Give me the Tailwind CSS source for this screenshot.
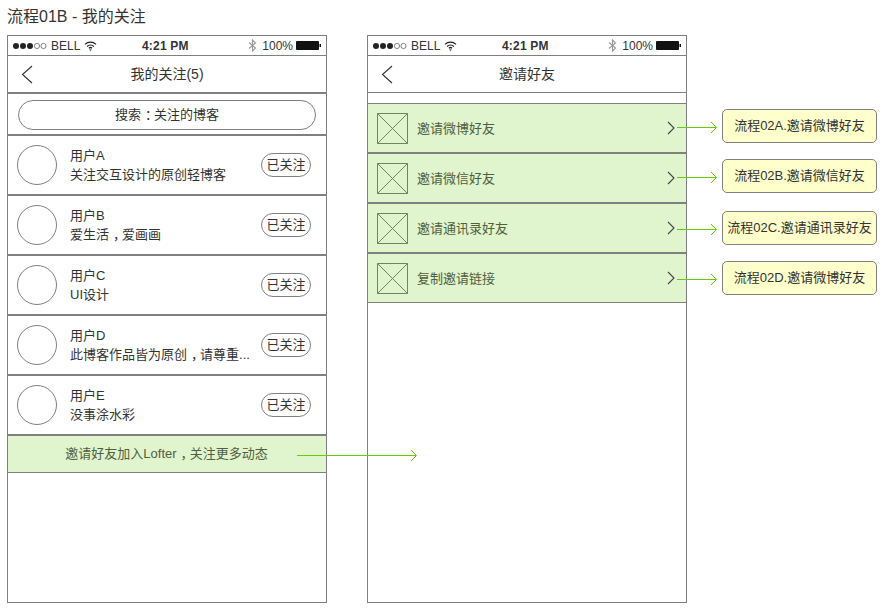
<!DOCTYPE html>
<html lang="zh-CN">
<head>
    <meta charset="UTF-8">
    <meta name="viewport" content="width=device-width, initial-scale=1.0">
    <title>流程01B - 我的关注</title>
    <script src="https://cdn.jsdelivr.net/npm/@tailwindcss/browser@4"></script>
</head>
<body class="relative w-[891px] h-[613px] overflow-hidden bg-white text-[13px] leading-[18px] text-[#333] font-['Liberation_Sans','Noto_Sans_CJK_SC',sans-serif]">
    <h1 class="h-[35px] pl-[7px] pt-[6px] text-[16px] leading-[22px] font-normal">流程01B - 我的关注</h1>

    <div class="flex pl-[7px]">
        <!-- 我的关注 -->
        <div class="w-[320px] h-[568px] border border-[#808080] shrink-0">
            <div class="flex items-center h-[20px] border-b border-[#808080] pl-[5px] pr-[5px] text-[12px] relative">
                <svg width="41" height="8" viewBox="0 0 41 8" class="shrink-0"><circle cx="3" cy="4" r="3" fill="#222"/><circle cx="10" cy="4" r="3" fill="#222"/><circle cx="17" cy="4" r="3" fill="#222"/><circle cx="24" cy="4" r="2.6" fill="none" stroke="#666" stroke-width=".8"/><circle cx="30.5" cy="4" r="2.6" fill="none" stroke="#666" stroke-width=".8"/></svg>
                <span class="ml-[-3px]">BELL</span>
                <svg width="13" height="10" viewBox="0 0 13 10" class="ml-[4px]"><path d="M1 3.4a8 8 0 0 1 11 0M3 5.4a5.2 5.2 0 0 1 7 0M4.9 7.2a2.4 2.4 0 0 1 3.2 0" fill="none" stroke="#222" stroke-width="1.3"/><path d="M6.5 10 5.2 8.4h2.6z" fill="#222"/></svg>
                <span class="absolute left-[134px] font-bold tracking-[.2px]">4:21 PM</span>
                <svg width="9" height="13" viewBox="0 0 9 13" class="ml-auto"><path d="M1 3.5 7.5 9 4.5 12V1l3 3L1 9.5" fill="none" stroke="#999" stroke-width="1.1"/></svg>
                <span class="ml-[5px]">100%</span>
                <svg width="25" height="9" viewBox="0 0 25 9" class="ml-[3px]"><rect x="0" y="0" width="23" height="9" rx="1" fill="#111"/><rect x="23.5" y="3" width="1.5" height="3" fill="#111"/></svg>
            </div>
            <div class="flex items-center h-[38px] border-b-2 border-[#808080] relative">
                <svg width="12" height="19" viewBox="0 0 12 19" class="ml-[13px]"><path d="M11 1 1.5 9.5 11 18" fill="none" stroke="#333" stroke-width="1.1"/></svg>
                <span class="absolute inset-x-0 text-center text-[14px]">我的关注(5)</span>
            </div>
            <div class="flex items-center h-[42px] border-b-2 border-[#808080] px-[10px]">
                <div class="w-[298px] h-[30px] mt-[2px] rounded-full border border-[#808080] flex items-center justify-center"><span>搜索<span class="ml-[4px] tracking-[-4px]">：</span>关注的博客</span></div>
            </div>

            <div class="flex items-center h-[60px] border-b-2 border-[#808080] pl-[9px] pr-[15px]">
                <div class="w-[40px] h-[40px] rounded-full border border-[#808080] shrink-0"></div>
                <div class="ml-[13px] flex-1 min-w-0"><p class="leading-[19px]">用户A</p><p class="leading-[19px]">关注交互设计的原创轻博客</p></div>
                <div class="w-[50px] h-[24px] rounded-full border border-[#808080] flex items-center justify-center shrink-0">已关注</div>
            </div>
            <div class="flex items-center h-[60px] border-b-2 border-[#808080] pl-[9px] pr-[15px]">
                <div class="w-[40px] h-[40px] rounded-full border border-[#808080] shrink-0"></div>
                <div class="ml-[13px] flex-1 min-w-0"><p class="leading-[19px]">用户B</p><p class="leading-[19px]">爱生活<span class="ml-[4px] tracking-[-4px]">，</span>爱画画</p></div>
                <div class="w-[50px] h-[24px] rounded-full border border-[#808080] flex items-center justify-center shrink-0">已关注</div>
            </div>
            <div class="flex items-center h-[60px] border-b-2 border-[#808080] pl-[9px] pr-[15px]">
                <div class="w-[40px] h-[40px] rounded-full border border-[#808080] shrink-0"></div>
                <div class="ml-[13px] flex-1 min-w-0"><p class="leading-[19px]">用户C</p><p class="leading-[19px]">UI设计</p></div>
                <div class="w-[50px] h-[24px] rounded-full border border-[#808080] flex items-center justify-center shrink-0">已关注</div>
            </div>
            <div class="flex items-center h-[60px] border-b-2 border-[#808080] pl-[9px] pr-[15px]">
                <div class="w-[40px] h-[40px] rounded-full border border-[#808080] shrink-0"></div>
                <div class="ml-[13px] flex-1 min-w-0"><p class="leading-[19px]">用户D</p><p class="leading-[19px] whitespace-nowrap">此博客作品皆为原创<span class="ml-[4px] tracking-[-4px]">，</span>请尊重...</p></div>
                <div class="w-[50px] h-[24px] rounded-full border border-[#808080] flex items-center justify-center shrink-0">已关注</div>
            </div>
            <div class="flex items-center h-[60px] border-b-2 border-[#808080] pl-[9px] pr-[15px]">
                <div class="w-[40px] h-[40px] rounded-full border border-[#808080] shrink-0"></div>
                <div class="ml-[13px] flex-1 min-w-0"><p class="leading-[19px]">用户E</p><p class="leading-[19px]">没事涂水彩</p></div>
                <div class="w-[50px] h-[24px] rounded-full border border-[#808080] flex items-center justify-center shrink-0">已关注</div>
            </div>
            <div class="flex items-center justify-center h-[37px] border-b border-[#808080] bg-[#e0f4cd] text-[#4f5f3f] pr-[1px]"><span>邀请好友加入Lofter<span class="ml-[4px] tracking-[-4px]">，</span>关注更多动态</span></div>
        </div>

        <!-- 邀请好友 -->
        <div class="w-[320px] h-[568px] ml-[40px] border border-[#808080] shrink-0">
            <div class="flex items-center h-[20px] border-b border-[#808080] pl-[5px] pr-[5px] text-[12px] relative">
                <svg width="41" height="8" viewBox="0 0 41 8" class="shrink-0"><circle cx="3" cy="4" r="3" fill="#222"/><circle cx="10" cy="4" r="3" fill="#222"/><circle cx="17" cy="4" r="3" fill="#222"/><circle cx="24" cy="4" r="2.6" fill="none" stroke="#666" stroke-width=".8"/><circle cx="30.5" cy="4" r="2.6" fill="none" stroke="#666" stroke-width=".8"/></svg>
                <span class="ml-[-3px]">BELL</span>
                <svg width="13" height="10" viewBox="0 0 13 10" class="ml-[4px]"><path d="M1 3.4a8 8 0 0 1 11 0M3 5.4a5.2 5.2 0 0 1 7 0M4.9 7.2a2.4 2.4 0 0 1 3.2 0" fill="none" stroke="#222" stroke-width="1.3"/><path d="M6.5 10 5.2 8.4h2.6z" fill="#222"/></svg>
                <span class="absolute left-[134px] font-bold tracking-[.2px]">4:21 PM</span>
                <svg width="9" height="13" viewBox="0 0 9 13" class="ml-auto"><path d="M1 3.5 7.5 9 4.5 12V1l3 3L1 9.5" fill="none" stroke="#999" stroke-width="1.1"/></svg>
                <span class="ml-[5px]">100%</span>
                <svg width="25" height="9" viewBox="0 0 25 9" class="ml-[3px]"><rect x="0" y="0" width="23" height="9" rx="1" fill="#111"/><rect x="23.5" y="3" width="1.5" height="3" fill="#111"/></svg>
            </div>
            <div class="flex items-center h-[37px] border-b border-[#808080] relative">
                <svg width="12" height="19" viewBox="0 0 12 19" class="ml-[13px]"><path d="M11 1 1.5 9.5 11 18" fill="none" stroke="#333" stroke-width="1.1"/></svg>
                <span class="absolute inset-x-0 text-center text-[14px]">邀请好友</span>
            </div>
            <div class="h-[10px]"></div>

            <div class="flex items-center h-[51px] border-t border-b-2 border-[#808080] bg-[#e0f4cd] text-[#4f5f3f] pl-[9px] pr-[11px]">
                <svg width="31" height="31" viewBox="0 0 31 31" class="shrink-0"><path d="M.5.5h30v30H.5zM.5.5l30 30M30.5.5l-30 30" fill="none" stroke="#6f8560"/></svg>
                <span class="ml-[9px] mt-[1px]">邀请微博好友</span>
                <svg width="8" height="14" viewBox="0 0 8 14" class="ml-auto"><path d="M1 1l6 6-6 6" fill="none" stroke="#444" stroke-width="1.1"/></svg>
            </div>
            <div class="flex items-center h-[50px] border-b-2 border-[#808080] bg-[#e0f4cd] text-[#4f5f3f] pl-[9px] pr-[11px]">
                <svg width="31" height="31" viewBox="0 0 31 31" class="shrink-0"><path d="M.5.5h30v30H.5zM.5.5l30 30M30.5.5l-30 30" fill="none" stroke="#6f8560"/></svg>
                <span class="ml-[9px] mt-[1px]">邀请微信好友</span>
                <svg width="8" height="14" viewBox="0 0 8 14" class="ml-auto"><path d="M1 1l6 6-6 6" fill="none" stroke="#444" stroke-width="1.1"/></svg>
            </div>
            <div class="flex items-center h-[50px] border-b-2 border-[#808080] bg-[#e0f4cd] text-[#4f5f3f] pl-[9px] pr-[11px]">
                <svg width="31" height="31" viewBox="0 0 31 31" class="shrink-0"><path d="M.5.5h30v30H.5zM.5.5l30 30M30.5.5l-30 30" fill="none" stroke="#6f8560"/></svg>
                <span class="ml-[9px] mt-[1px]">邀请通讯录好友</span>
                <svg width="8" height="14" viewBox="0 0 8 14" class="ml-auto"><path d="M1 1l6 6-6 6" fill="none" stroke="#444" stroke-width="1.1"/></svg>
            </div>
            <div class="flex items-center h-[49px] border-b border-[#808080] bg-[#e0f4cd] text-[#4f5f3f] pl-[9px] pr-[11px]">
                <svg width="31" height="31" viewBox="0 0 31 31" class="shrink-0"><path d="M.5.5h30v30H.5zM.5.5l30 30M30.5.5l-30 30" fill="none" stroke="#6f8560"/></svg>
                <span class="ml-[9px] mt-[1px]">复制邀请链接</span>
                <svg width="8" height="14" viewBox="0 0 8 14" class="ml-auto"><path d="M1 1l6 6-6 6" fill="none" stroke="#444" stroke-width="1.1"/></svg>
            </div>
        </div>

        <!-- 流程说明 -->
        <div class="ml-[35px] w-[155px] shrink-0 pt-[74px]">
            <div class="h-[34px] rounded-[5px] border border-[#808080] bg-[#ffffcc] flex items-center justify-center whitespace-nowrap">流程02A.邀请微博好友</div>
            <div class="h-[34px] mt-[16px] rounded-[5px] border border-[#808080] bg-[#ffffcc] flex items-center justify-center whitespace-nowrap">流程02B.邀请微信好友</div>
            <div class="h-[34px] mt-[18px] rounded-[5px] border border-[#808080] bg-[#ffffcc] flex items-center justify-center whitespace-nowrap">流程02C.邀请通讯录好友</div>
            <div class="h-[34px] mt-[16px] rounded-[5px] border border-[#808080] bg-[#ffffcc] flex items-center justify-center whitespace-nowrap">流程02D.邀请微博好友</div>
        </div>
    </div>

    <!-- 连接箭头 -->
    <div class="absolute left-[297px] top-[455px] w-[119px] h-px bg-[#66cc00]"></div>
    <div class="absolute left-[677px] top-[127px] w-[39px] h-px bg-[#66cc00]"></div>
    <div class="absolute left-[677px] top-[177px] w-[39px] h-px bg-[#66cc00]"></div>
    <div class="absolute left-[677px] top-[229px] w-[39px] h-px bg-[#66cc00]"></div>
    <div class="absolute left-[677px] top-[279px] w-[39px] h-px bg-[#66cc00]"></div>
    <svg class="absolute left-0 top-0 pointer-events-none" width="891" height="613" viewBox="0 0 891 613">
        <path d="M411 450l5.5 5.5-5.5 5.5" fill="none" stroke="#66cc00"/>
        <path d="M711 122l5.5 5.5-5.5 5.5" fill="none" stroke="#66cc00"/>
        <path d="M711 172l5.5 5.5-5.5 5.5" fill="none" stroke="#66cc00"/>
        <path d="M711 224l5.5 5.5-5.5 5.5" fill="none" stroke="#66cc00"/>
        <path d="M711 274l5.5 5.5-5.5 5.5" fill="none" stroke="#66cc00"/>
    </svg>
</body>
</html>
